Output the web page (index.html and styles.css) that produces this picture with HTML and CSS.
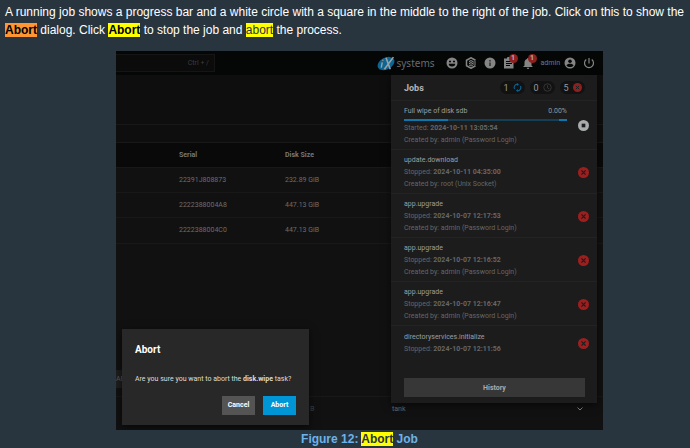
FILE: index.html
```html
<!DOCTYPE html>
<html lang="en">
<head>
    <meta charset="UTF-8">
    <meta name="viewport" content="width=device-width, initial-scale=1.0">
    <title>Abort Job</title>
    <link rel="stylesheet" href="styles.css">
</head>
<body>

<!-- Shared icons -->
<svg class="sprite" aria-hidden="true">
    <symbol id="icon-error" viewBox="0 0 24 24">
        <circle cx="12" cy="12" r="12" fill="currentColor"/>
        <path d="M7.5 7.5l9 9M16.5 7.5l-9 9" stroke="#1c1c1c" stroke-width="2.6"/>
    </symbol>
</svg>

<p class="intro">A running job shows a progress bar and a white circle with a square in the middle to the right of the job. Click on this to show the <mark class="current">Abort</mark> dialog. Click <mark class="strong">Abort</mark> to stop the job and <mark>abort</mark> the process.</p>

<figure class="figure">
    <div class="app">
        <header class="topbar">
            <input class="search" type="text" placeholder="Ctrl + /" aria-label="Search">
            <div class="tools">
                <a class="brand" href="#" aria-label="iXsystems">
                    <svg class="brand-mark" viewBox="0 0 34 28">
                        <ellipse cx="17" cy="14" rx="17" ry="11" transform="rotate(-28 17 14)" fill="#0d6592"/>
                        <path d="M10 12l-2 10M11 7v2" stroke="#9aa2a7" stroke-width="2.6"/>
                        <path d="M17 3l8 22M31 2L14 25" stroke="#9aa2a7" stroke-width="3" fill="none"/>
                    </svg>
                    <span>systems</span>
                </a>
                <svg class="icon" viewBox="0 0 24 24">
                    <circle cx="12" cy="12" r="11" fill="currentColor"/>
                    <path d="M6 7.5h4v3H6zM14 7.5h4v3h-4zM5.5 13.5h13a6.5 5.5 0 0 1-13 0z" fill="#050606"/>
                </svg>
                <svg class="icon" viewBox="0 0 24 24">
                    <path d="M21 6.5L12 1.5 3 6.5v11l9 5 9-5" fill="none" stroke="currentColor" stroke-width="3"/>
                    <path d="M8 9l4-2 4 2-4 2zM8 12.5l4 2 4-2M8 16l4 2 4-2M16 10h6M16 14h6" fill="none" stroke="currentColor" stroke-width="2"/>
                </svg>
                <svg class="icon" viewBox="0 0 24 24">
                    <circle cx="12" cy="12" r="11" fill="currentColor"/>
                    <path d="M12 6v3M12 11v7" stroke="#242525" stroke-width="2.6"/>
                </svg>
                <span class="with-badge">
                    <svg class="icon" viewBox="0 0 24 24">
                        <path d="M2 3h6a4 4 0 0 1 8 0h5v20H2z" fill="currentColor"/>
                        <path d="M6 9h12M6 13h12M6 17h8" stroke="#050606" stroke-width="2"/>
                    </svg>
                    <span class="badge">1</span>
                </span>
                <span class="with-badge">
                    <svg class="icon" viewBox="0 0 24 24">
                        <path d="M12 2a2 2 0 0 1 2 2c3 1 5 3.500 5 7v6l3 3H2l3-3v-6c0-3.500 2-6 5-7a2 2 0 0 1 2-2zM9.500 21.500h5a2.500 2.500 0 0 1-5 0z" fill="currentColor"/>
                    </svg>
                    <span class="badge">1</span>
                </span>
                <span class="user">admin</span>
                <svg class="icon" viewBox="0 0 24 24">
                    <circle cx="12" cy="12" r="11" fill="currentColor"/>
                    <circle cx="12" cy="8.500" r="3.500" fill="#050606"/>
                    <path d="M5 17c1-5 13-5 14 0-3 4-11 4-14 0z" fill="#050606"/>
                </svg>
                <svg class="icon" viewBox="0 0 24 24">
                    <path d="M12 2v11M6.500 5a9 9 0 1 0 11 0" fill="none" stroke="currentColor" stroke-width="2.4"/>
                </svg>
            </div>
        </header>

        <main class="content">
            <div class="card-top"></div>
            <table class="disks">
                <thead>
                    <tr><th>Serial</th><th>Disk Size</th></tr>
                </thead>
                <tbody>
                    <tr><td>22391J808873</td><td>232.89 GiB</td></tr>
                    <tr><td>2222388004A8</td><td>447.13 GiB</td></tr>
                    <tr><td>2222388004C0</td><td>447.13 GiB</td></tr>
                </tbody>
            </table>
            <div class="card-actions"><span class="chip">AP</span></div>
            <div class="pool-row">
                <span class="pool-size">B</span>
                <span class="pool-name">tank</span>
                <svg class="chevron" viewBox="0 0 12 8"><path d="M1 1l5 5 5-5" fill="none" stroke="currentColor" stroke-width="2"/></svg>
            </div>
        </main>

        <aside class="jobs">
            <header class="jobs-header">
                <h2>Jobs</h2>
                <span class="count">1
                    <svg class="count-icon running" viewBox="0 0 24 24"><path d="M4 16a9 9 0 0 1 8-13M20 8a9 9 0 0 1-8 13" fill="none" stroke="currentColor" stroke-width="3"/><path d="M11 0l5 4-5 4zM13 16l-5 4 5 4z" fill="currentColor"/></svg>
                </span>
                <span class="count">0
                    <svg class="count-icon waiting" viewBox="0 0 24 24"><circle cx="12" cy="12" r="10" fill="none" stroke="currentColor" stroke-width="2.500"/><path d="M12 6v7l5 3" fill="none" stroke="currentColor" stroke-width="2.500"/></svg>
                </span>
                <span class="count">5
                    <svg class="count-icon failed"><use href="#icon-error"/></svg>
                </span>
            </header>
            <ul class="job-list">
                <li class="job">
                    <div class="job-info">
                        <div class="job-title"><a href="#">Full wipe of disk sdb</a><span>0.00%</span></div>
                        <div class="progress"><span class="progress-start"></span><span class="progress-end"></span></div>
                        <p>Started: <b>2024-10-11 13:05:54</b></p>
                        <p>Created by: admin (Password Login)</p>
                    </div>
                    <button class="stop" type="button" aria-label="Abort job">
                        <svg viewBox="0 0 24 24"><circle cx="12" cy="12" r="12" fill="#a9abad"/><path d="M8 8h8v8h-8z" fill="#1c1c1c"/></svg>
                    </button>
                </li>
                <li class="job">
                    <div class="job-info">
                        <div class="job-title"><a href="#">update.download</a></div>
                        <p>Stopped: <b>2024-10-11 04:35:00</b></p>
                        <p>Created by: root (Unix Socket)</p>
                    </div>
                    <svg class="job-state"><use href="#icon-error"/></svg>
                </li>
                <li class="job">
                    <div class="job-info">
                        <div class="job-title"><a href="#">app.upgrade</a></div>
                        <p>Stopped: <b>2024-10-07 12:17:53</b></p>
                        <p>Created by: admin (Password Login)</p>
                    </div>
                    <svg class="job-state"><use href="#icon-error"/></svg>
                </li>
                <li class="job">
                    <div class="job-info">
                        <div class="job-title"><a href="#">app.upgrade</a></div>
                        <p>Stopped: <b>2024-10-07 12:16:52</b></p>
                        <p>Created by: admin (Password Login)</p>
                    </div>
                    <svg class="job-state"><use href="#icon-error"/></svg>
                </li>
                <li class="job">
                    <div class="job-info">
                        <div class="job-title"><a href="#">app.upgrade</a></div>
                        <p>Stopped: <b>2024-10-07 12:16:47</b></p>
                        <p>Created by: admin (Password Login)</p>
                    </div>
                    <svg class="job-state"><use href="#icon-error"/></svg>
                </li>
                <li class="job">
                    <div class="job-info">
                        <div class="job-title"><a href="#">directoryservices.initialize</a></div>
                        <p>Stopped: <b>2024-10-07 12:11:56</b></p>
                    </div>
                    <svg class="job-state"><use href="#icon-error"/></svg>
                </li>
            </ul>
            <button class="history" type="button">History</button>
        </aside>

        <div class="dialog" role="dialog" aria-labelledby="dialog-title">
            <h2 id="dialog-title">Abort</h2>
            <p>Are you sure you want to abort the <b>disk.wipe</b> task?</p>
            <div class="dialog-actions">
                <button class="btn" type="button">Cancel</button>
                <button class="btn primary" type="button">Abort</button>
            </div>
        </div>
    </div>
    <figcaption>Figure 12: <mark>Abort</mark> Job</figcaption>
</figure>

</body>
</html>
```

FILE: styles.css
```css
* {
    box-sizing: border-box;
}
body {
    margin: 0;
    padding: 3px 5px 0;
    background-color: #29353e;
    color: #fff;
    font-family: "Liberation Sans", Arial, sans-serif;
}
h2, p, ul, figure {
    margin: 0;
    padding: 0;
}
svg {
    display: block;
    flex: none;
}
a {
    color: inherit;
    text-decoration: none;
}
button {
    border: none;
    padding: 0;
    font-family: inherit;
    cursor: pointer;
}
.sprite {
    position: absolute;
    width: 0;
    height: 0;
}
.intro {
    font-size: 12px;
    line-height: 18px;
}
mark {
    background-color: #ff0;
    color: #29353e;
}
mark.strong {
    color: #000;
    font-weight: bold;
}
mark.current {
    background-color: #ff9632;
    color: #000;
    font-weight: bold;
}
.figure {
    margin: 12px 82px 0 111px;
}
figcaption {
    text-align: center;
    font-size: 12px;
    line-height: 18px;
    font-weight: bold;
    color: #6cb2eb;
}

/* App frame */
.app {
    position: relative;
    background-color: #0e0e0e;
    color: #6d6d6d;
    font-family: Roboto, sans-serif;
    font-size: 7px;
    line-height: 12px;
    overflow: hidden;
}
.topbar {
    display: flex;
    justify-content: space-between;
    align-items: center;
    height: 24px;
    padding-right: 8px;
    background-color: #050606;
}
.search {
    width: 99px;
    height: 18px;
    padding: 0 5px;
    background-color: #0b0b0b;
    border: 1px solid #151515;
    border-left: none;
    color: #555;
    font-family: inherit;
    font-size: 7px;
    text-align: right;
}
.search::placeholder {
    color: #3c3c3c;
    opacity: 1;
}
.tools {
    display: flex;
    align-items: center;
    gap: 7px;
    color: #858585;
}
.brand {
    display: flex;
    align-items: center;
    gap: 1px;
    margin-right: 4px;
    color: #6b6b6b;
    font-family: "Noto Sans", sans-serif;
    font-size: 10px;
}
.brand-mark {
    width: 18px;
    height: 15px;
}
.icon {
    width: 12px;
    height: 12px;
}
.with-badge {
    position: relative;
}
.badge {
    position: absolute;
    top: -3px;
    right: -3px;
    width: 9px;
    height: 9px;
    border-radius: 50%;
    background-color: #8f2020;
    color: #b5b5b5;
    font-size: 7px;
    line-height: 9px;
    font-weight: bold;
    text-align: center;
}
.user {
    margin-right: -3px;
    color: #777;
}

/* Disk table behind the panel */
.content {
    display: flow-root;
}
.card-top {
    height: 50px;
    margin-bottom: 17px;
    border-bottom: 1px solid #181818;
}
.disks {
    width: 100%;
    table-layout: fixed;
    border-collapse: collapse;
    background-color: #111;
}
.disks th, .disks td {
    height: 25px;
    padding: 0;
    border-top: 1px solid #181818;
    text-align: left;
}
.disks th {
    background-color: #090909;
    color: #777;
}
.disks th:first-child {
    width: 169px;
}
.disks th:first-child, .disks td:first-child {
    padding-left: 63px;
}
.card-actions {
    display: flex;
    align-items: flex-end;
    height: 154px;
    padding-bottom: 8px;
    border-top: 1px solid #181818;
    border-bottom: 1px solid #181818;
    background-color: #111;
}
.chip {
    width: 14px;
    padding: 3px 0;
    background-color: #1e1e1e;
    color: #5a5a5a;
}
.pool-row {
    display: flex;
    align-items: center;
    height: 33px;
    padding: 0 20px 8px 194px;
    background-color: #111;
}
.pool-size {
    width: 82px;
    color: #444;
}
.chevron {
    width: 6px;
    height: 4px;
    margin-left: auto;
    color: #858585;
}

/* Jobs panel */
.jobs {
    position: absolute;
    top: 24px;
    right: 6px;
    width: 206px;
    background-color: #1c1c1c;
    box-shadow: 0 2px 8px rgba(0, 0, 0, 0.6);
}
.jobs-header {
    display: flex;
    align-items: center;
    gap: 5px;
    height: 26px;
    padding: 0 12px 0 13px;
    border-bottom: 1px solid #232323;
}
.jobs-header h2 {
    margin-right: auto;
    color: #b4b4b4;
    font-size: 9px;
}
.count {
    display: flex;
    align-items: center;
    justify-content: center;
    gap: 4px;
    width: 25px;
    height: 13px;
    border-radius: 7px;
    background-color: #121212;
    color: #999;
    font-size: 9px;
}
.count-icon {
    width: 9px;
    height: 9px;
}
.running {
    color: #0d6592;
}
.waiting {
    color: #383838;
}
.failed {
    color: #8f2020;
}
.job-list {
    list-style: none;
}
.job {
    display: flex;
    align-items: center;
    justify-content: space-between;
    padding: 4px 8px 3px 13px;
    border-bottom: 1px solid #232323;
    color: #666;
}
.job:last-child {
    padding-top: 5px;
    border-bottom: none;
}
.job-info {
    width: 163px;
}
.job-title {
    display: flex;
    justify-content: space-between;
    color: #999;
}
.job-title a {
    color: #9a9fa3;
}
.progress {
    display: flex;
    justify-content: space-between;
    height: 2px;
    margin: 2px 0 1px;
    background-color: #153f54;
}
.progress-start {
    width: 27%;
    background-color: #0d76ac;
}
.progress-end {
    width: 5%;
    background-color: #0d76ac;
}
.stop {
    background: none;
}
.stop svg, .job-state {
    width: 11px;
    height: 11px;
}
.job-state {
    color: #9c1f1f;
}
.history {
    display: block;
    width: 181px;
    height: 19px;
    margin: 20px 12px 6px 13px;
    background-color: #373737;
    color: #aaa;
    font-size: 7px;
    font-weight: bold;
}

/* Abort dialog */
.dialog {
    position: absolute;
    left: 6px;
    bottom: 5px;
    width: 187px;
    padding: 15px 13px 10px;
    background-color: #282828;
    color: #ddd;
    box-shadow: 0 2px 8px rgba(0, 0, 0, 0.6);
}
.dialog h2 {
    margin-bottom: 17px;
    color: #fff;
    font-size: 10px;
}
.dialog-actions {
    display: flex;
    justify-content: flex-end;
    gap: 8px;
    margin-top: 11px;
}
.btn {
    height: 19px;
    min-width: 33px;
    padding: 0 5px;
    background-color: #545454;
    color: #fff;
    font-size: 7px;
    font-weight: bold;
}
.btn.primary {
    background-color: #0095d5;
}
```
